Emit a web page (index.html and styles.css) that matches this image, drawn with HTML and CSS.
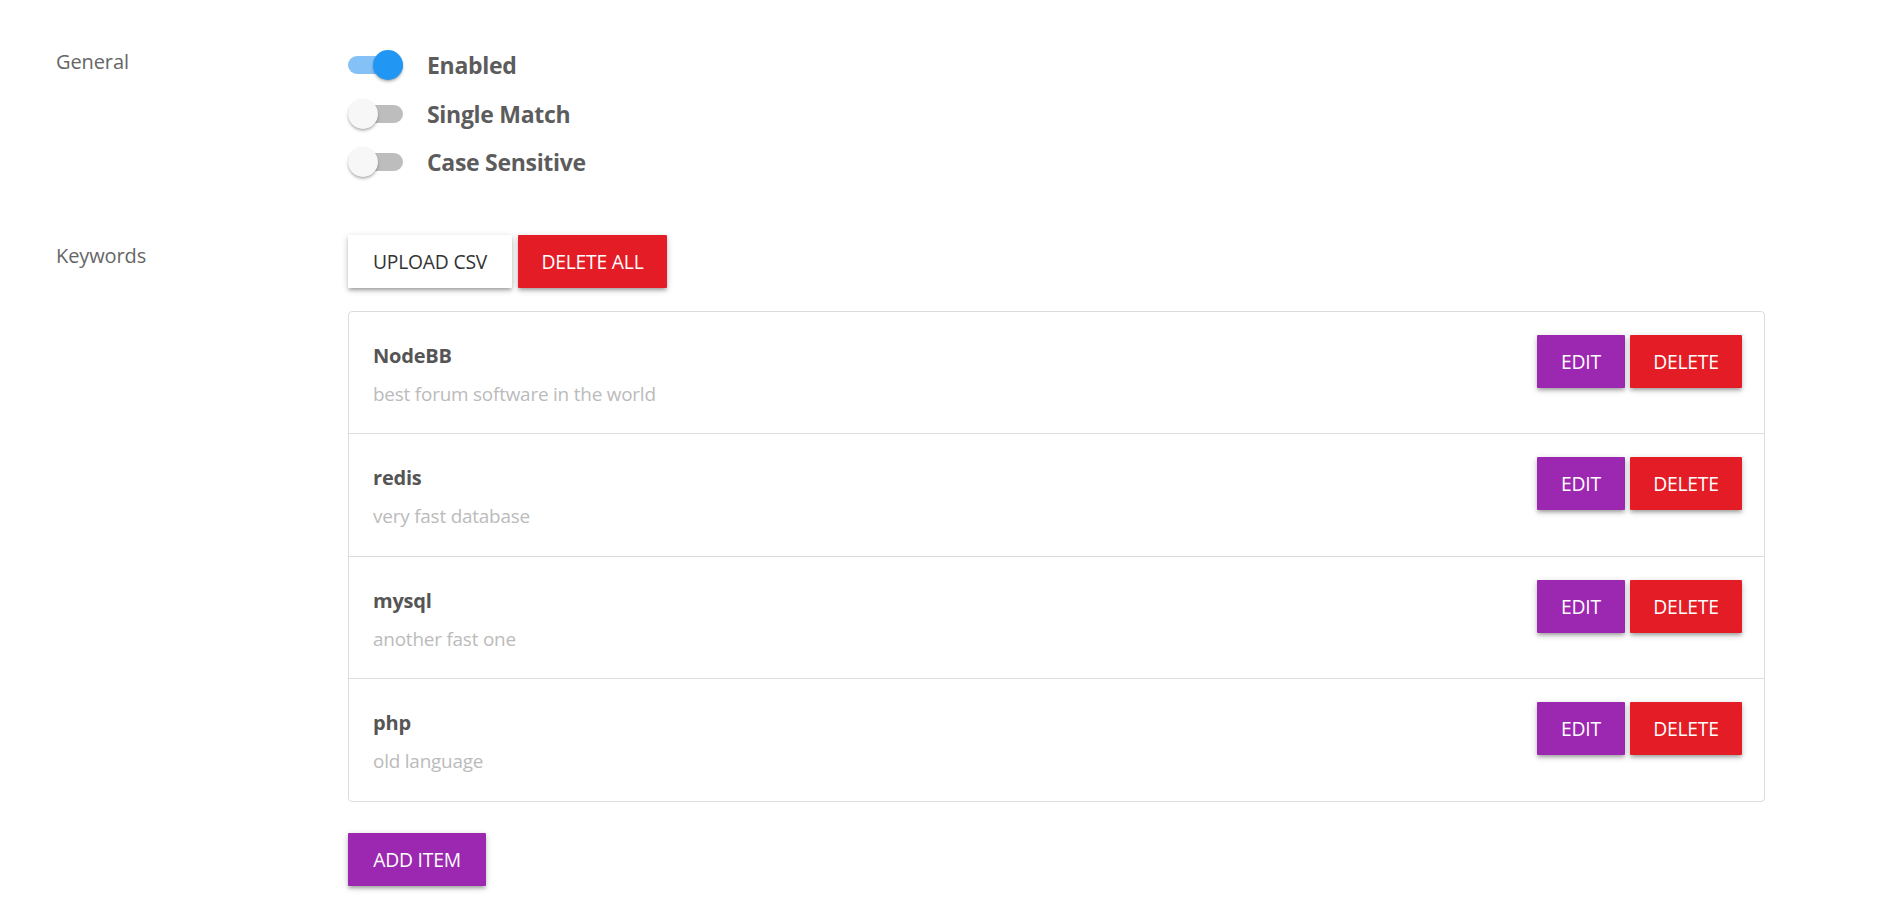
FILE: index.html
```html
<!DOCTYPE html>
<html lang="en">
<head>
<meta charset="utf-8">
<title>Keywords settings</title>
<link rel="stylesheet" href="styles.css">
</head>
<body>
<div class="page">
  <section class="section section-general">
    <div class="label">General</div>
    <div class="content">
      <div class="toggle-row">
        <span class="switch on"><span class="knob"></span></span>
        <span class="toggle-text">Enabled</span>
      </div>
      <div class="toggle-row">
        <span class="switch"><span class="knob"></span></span>
        <span class="toggle-text">Single Match</span>
      </div>
      <div class="toggle-row">
        <span class="switch"><span class="knob"></span></span>
        <span class="toggle-text">Case Sensitive</span>
      </div>
    </div>
  </section>

  <section class="section section-keywords">
    <div class="label">Keywords</div>
    <div class="content">
      <div class="toolbar">
        <button class="btn btn-white btn-upload">UPLOAD CSV</button>
        <button class="btn btn-red btn-deleteall">DELETE ALL</button>
      </div>
      <div class="list">
        <div class="kw-row">
          <div class="kw-text">
            <div class="kw-title">NodeBB</div>
            <div class="kw-desc">best forum software in the world</div>
          </div>
          <div class="kw-actions">
            <button class="btn btn-purple btn-edit">EDIT</button>
            <button class="btn btn-red btn-delete">DELETE</button>
          </div>
        </div>
        <div class="kw-row">
          <div class="kw-text">
            <div class="kw-title">redis</div>
            <div class="kw-desc">very fast database</div>
          </div>
          <div class="kw-actions">
            <button class="btn btn-purple btn-edit">EDIT</button>
            <button class="btn btn-red btn-delete">DELETE</button>
          </div>
        </div>
        <div class="kw-row">
          <div class="kw-text">
            <div class="kw-title">mysql</div>
            <div class="kw-desc">another fast one</div>
          </div>
          <div class="kw-actions">
            <button class="btn btn-purple btn-edit">EDIT</button>
            <button class="btn btn-red btn-delete">DELETE</button>
          </div>
        </div>
        <div class="kw-row">
          <div class="kw-text">
            <div class="kw-title">php</div>
            <div class="kw-desc">old language</div>
          </div>
          <div class="kw-actions">
            <button class="btn btn-purple btn-edit">EDIT</button>
            <button class="btn btn-red btn-delete">DELETE</button>
          </div>
        </div>
      </div>
      <div class="add-wrap">
        <button class="btn btn-purple btn-add">ADD ITEM</button>
      </div>
    </div>
  </section>
</div>
</body>
</html>
```

FILE: styles.css
```css
* { box-sizing: border-box; }

html, body {
  margin: 0;
  padding: 0;
  background: #ffffff;
}

body {
  font-family: "Open Sans", "Noto Sans", "Liberation Sans", sans-serif;
  font-size: 20px;
  color: #666;
}

.page {
  padding: 41px 0 0 56px;
}

.section {
  display: flex;
  align-items: flex-start;
}

.section-keywords {
  margin-top: 48px;
}

.label {
  width: 292px;
  flex: none;
  padding-top: 5px;
  line-height: 32px;
  color: #666;
  font-size: 20px;
  letter-spacing: -0.1px;
}

.content {
  width: 1417px;
  flex: none;
}

/* toggles */
.toggle-row {
  height: 48.5px;
  display: flex;
  align-items: center;
}

.switch {
  position: relative;
  display: inline-block;
  width: 55px;
  height: 18px;
  border-radius: 9px;
  background: #bdbdbd;
  flex: none;
}

.switch .knob {
  position: absolute;
  top: -6px;
  left: 0;
  width: 30px;
  height: 30px;
  border-radius: 50%;
  background: #f7f7f7;
  box-shadow: 0 2px 3px rgba(0,0,0,0.25), 0 1px 1px rgba(0,0,0,0.08);
}

.switch.on {
  background: #84c1f6;
}

.switch.on .knob {
  left: 25px;
  background: #2196f3;
}

.toggle-text {
  margin-left: 24px;
  font-weight: 700;
  color: #5c5c5c;
  font-size: 23px;
  letter-spacing: -0.3px;
}

/* buttons */
.btn {
  font-family: inherit;
  font-size: 19.3px;
  height: 53px;
  line-height: 53px;
  padding: 0;
  border: 0;
  border-radius: 1px;
  text-align: center;
  cursor: pointer;
  box-shadow: 0 3px 3px rgba(0,0,0,0.14), 0 4px 2px -3px rgba(0,0,0,0.12), 0 2px 7px rgba(0,0,0,0.2);
  letter-spacing: -0.2px;
}

.btn-white { background: #fff; color: #333; }
.btn-red { background: #e41c25; color: #fff; }
.btn-purple { background: #9c27b0; color: #fff; }

.btn-upload { width: 164px; }
.btn-deleteall { width: 149px; }
.btn-edit { width: 88px; }
.btn-delete { width: 112px; }
.btn-add { width: 138px; }

.toolbar {
  display: flex;
  gap: 6px;
  height: 53px;
}

/* list */
.list {
  margin-top: 23px;
  border: 1px solid #dcdcdc;
  border-radius: 4px;
}

.kw-row {
  display: flex;
  justify-content: space-between;
  align-items: flex-start;
  padding: 23px 22px 23px 24px;
}

.kw-row + .kw-row {
  border-top: 1px solid #dcdcdc;
}

.kw-title {
  margin-top: 5px;
  line-height: 31px;
  font-weight: 700;
  color: #555;
  font-size: 20px;
  letter-spacing: -0.2px;
}

.kw-desc {
  margin-top: 8px;
  line-height: 31.5px;
  color: #bbb;
  font-size: 18.9px;
  letter-spacing: -0.2px;
}

.kw-actions {
  display: flex;
  gap: 5px;
}

.add-wrap {
  margin-top: 31px;
  padding-bottom: 40px;
}
```
